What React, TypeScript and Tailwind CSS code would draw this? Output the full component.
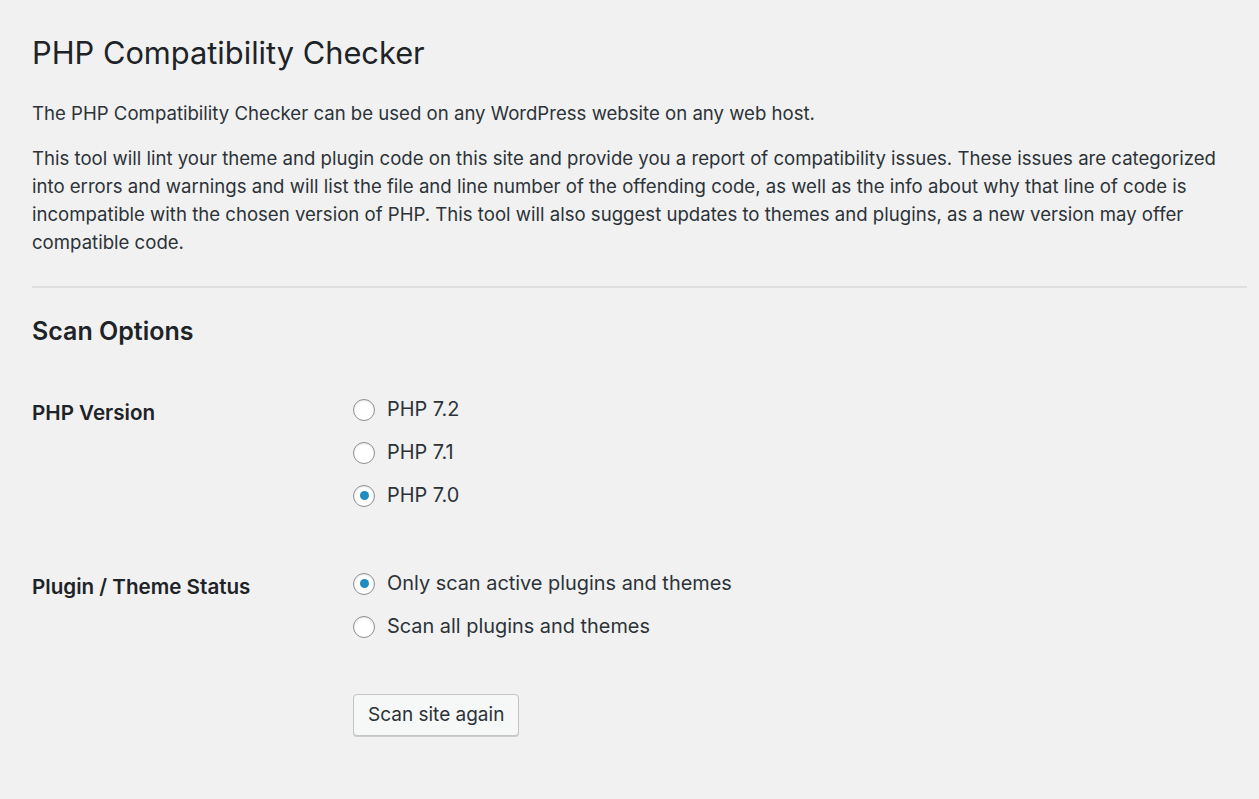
import React from "react";

const Radio = ({ checked, label }: { checked?: boolean; label: string }) => (
  <label className="flex items-center gap-[12px] h-[43px]">
    <span className="w-[22px] h-[22px] rounded-full border border-[#8c8f94] bg-white shadow-[inset_0_1px_2px_rgba(0,0,0,0.1)] flex items-center justify-center shrink-0">
      {checked && <span className="w-[9px] h-[9px] rounded-full bg-[#1e8cbe]" />}
    </span>
    <span className="text-[19.9px] text-[#2c3338]">{label}</span>
  </label>
);

export default function App() {
  return (
    <div
      className="min-h-[799px] bg-[#f1f1f1] pl-[32px] pr-[12px] pt-[30px] text-[#2c3338]"
      style={{ fontFamily: "Inter, 'Noto Sans', sans-serif" }}
    >
      <h1 className="text-[30.8px] leading-[46px] text-[#1d2327] font-normal">
        PHP Compatibility Checker
      </h1>

      <p className="mt-[23px] text-[18.6px] leading-[28px]">
        The PHP Compatibility Checker can be used on any WordPress website on any web host.
      </p>
      <p className="mt-[17px] text-[18.6px] leading-[28px] pr-[20px]">
        This tool will lint your theme and plugin code on this site and provide you a report of compatibility issues. These issues are categorized into errors and warnings and will list the file and line number of the offending code, as well as the info about why that line of code is incompatible with the chosen version of PHP. This tool will also suggest updates to themes and plugins, as a new version may offer compatible code.
      </p>

      <hr className="mt-[30px] border-0 border-t-2 border-[#e0e0e0]" />

      <h2 className="mt-[27px] text-[25px] leading-[32px] font-semibold text-[#1d2327]">
        Scan Options
      </h2>

      <div className="mt-[41px] grid grid-cols-[321px_1fr]">
        <div className="text-[20.6px] font-semibold text-[#1d2327] pt-[10px]">PHP Version</div>
        <div className="flex flex-col">
          <Radio label="PHP 7.2" />
          <Radio label="PHP 7.1" />
          <Radio checked label="PHP 7.0" />
        </div>
      </div>

      <div className="mt-[45px] grid grid-cols-[321px_1fr]">
        <div className="text-[20.6px] font-semibold text-[#1d2327] pt-[10px]">Plugin / Theme Status</div>
        <div className="flex flex-col">
          <Radio checked label="Only scan active plugins and themes" />
          <Radio label="Scan all plugins and themes" />
        </div>
      </div>

      <div className="mt-[46px] pl-[321px]">
        <button className="h-[42px] px-[14px] rounded-[4px] border border-[#c3c4c7] bg-[#f6f7f7] shadow-[0_1px_0_#ccc] text-[19px] text-[#2c3338]">
          Scan site again
        </button>
      </div>
    </div>
  );
}
